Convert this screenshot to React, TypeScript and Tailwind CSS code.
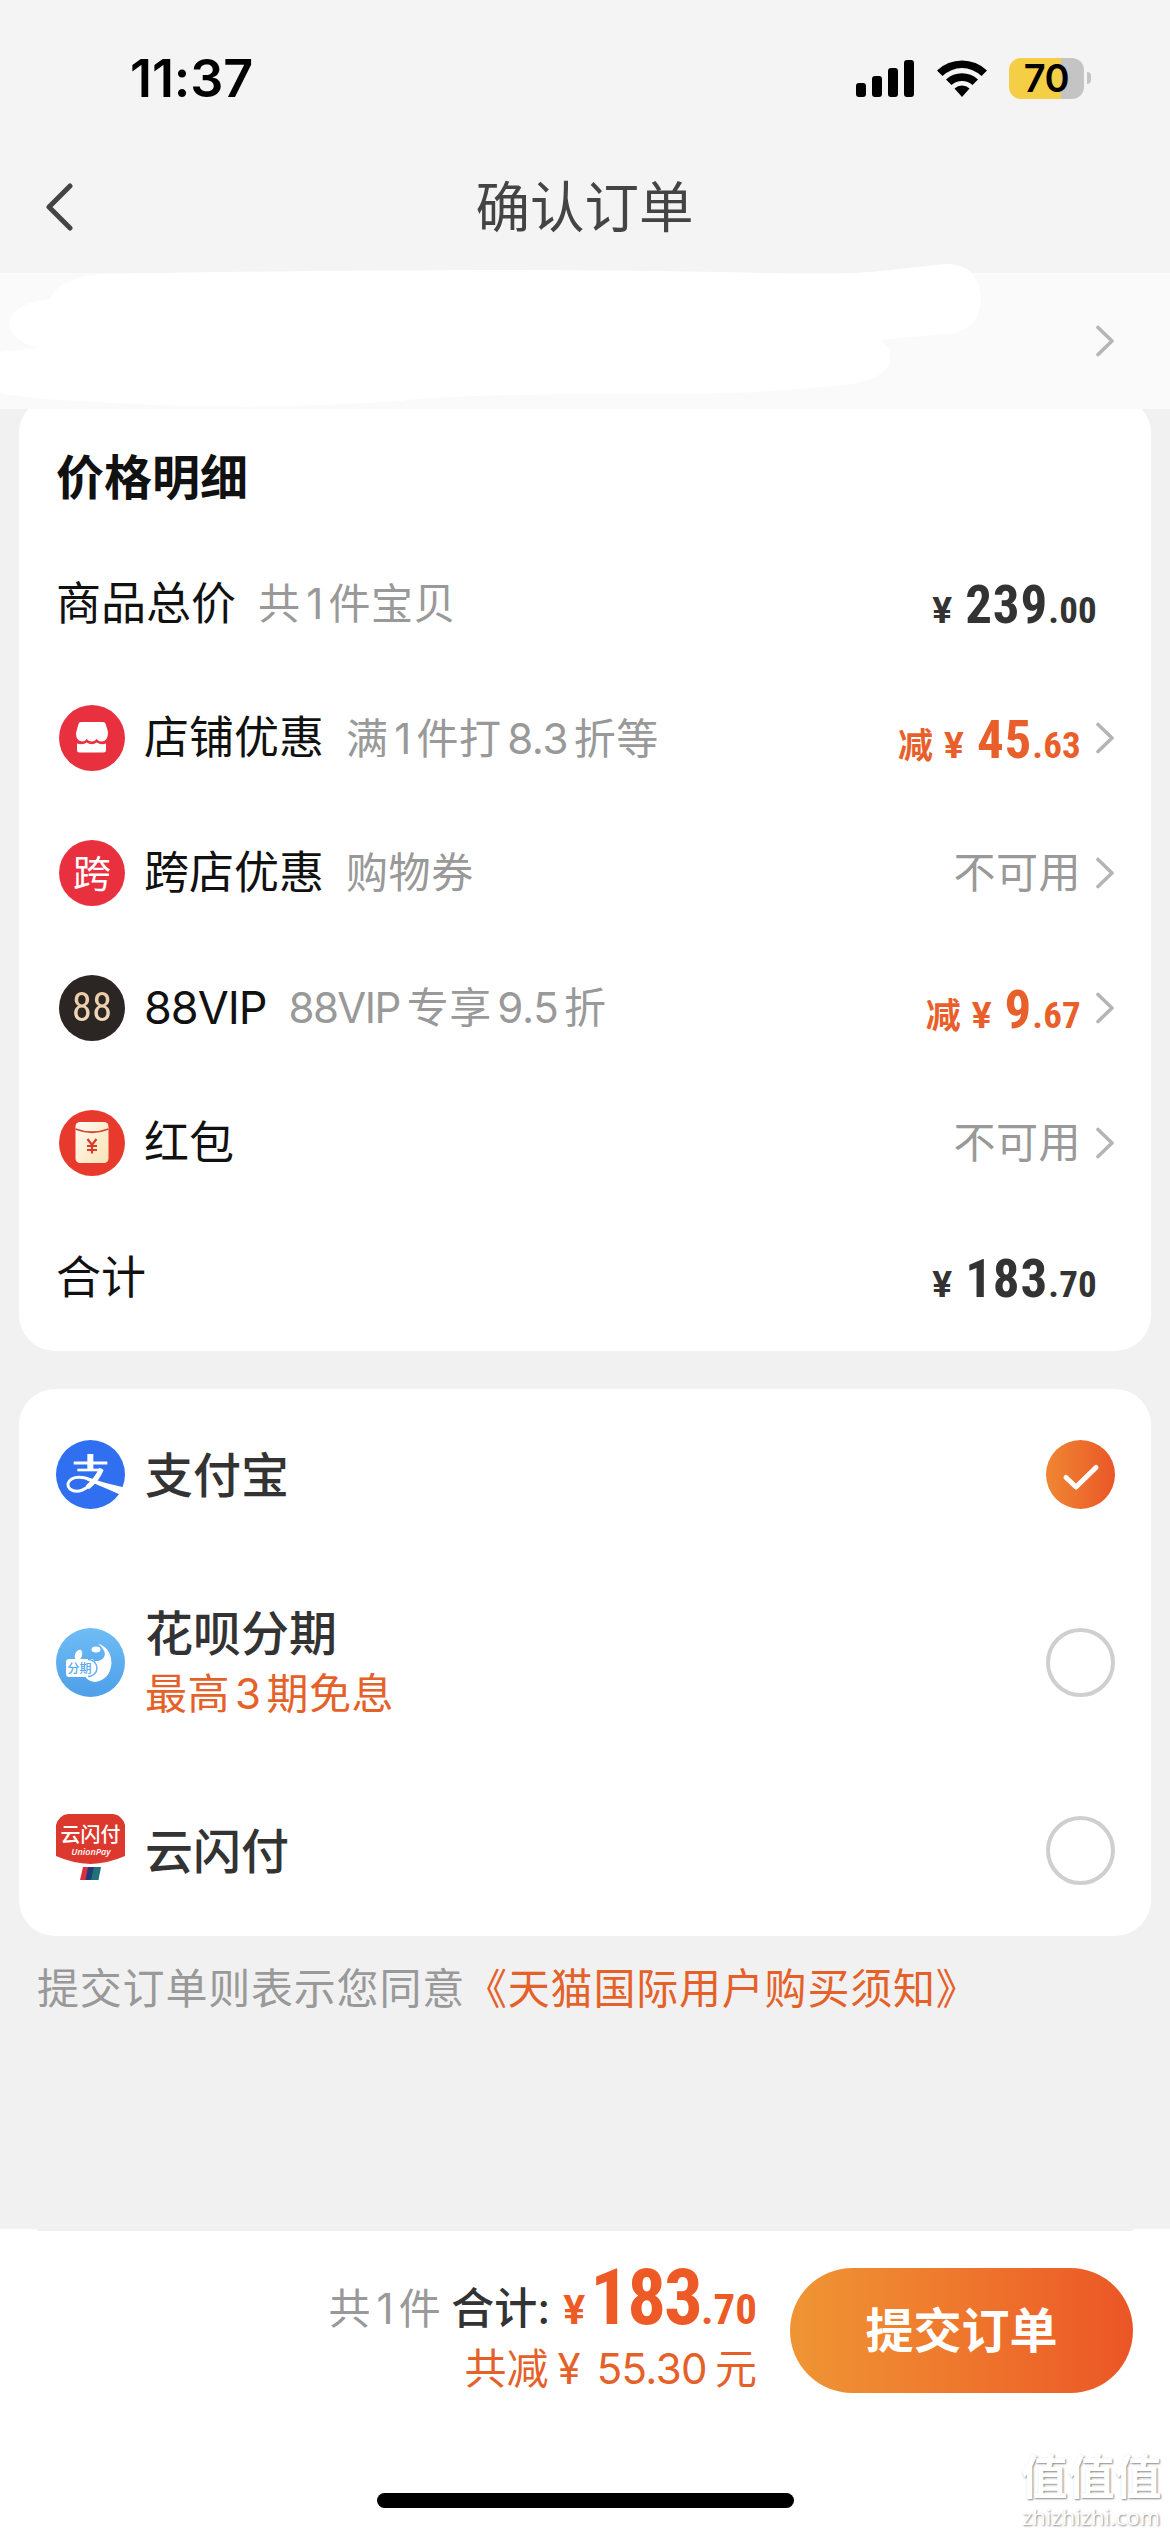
import type { ReactNode } from 'react'

const discounts = [
  { icon: <ShopIcon />, label: '店铺优惠', sub: <>满<Num>1</Num>件打<Num>8.3</Num>折等</>, cut: ['45', '.63'] },
  { icon: <CrossIcon />, label: '跨店优惠', sub: <>购物券</> },
  {
    icon: <VipIcon />,
    label: '88VIP',
    sub: <><span className="mr-[7px] tracking-[-1.6px]">88VIP</span>专享<Num>9.5</Num>折</>,
    cut: ['9', '.67'],
  },
  { icon: <RedPacketIcon />, label: '红包' },
]

const payments = [
  { icon: <AlipayIcon />, label: '支付宝', checked: true },
  { icon: <HuabeiIcon />, label: '花呗分期', note: <>最高<span className="mx-[5px]">3</span>期免息</> },
  { icon: <UnionPayIcon />, label: '云闪付' },
]

export default function App() {
  return (
    <div className="flex flex-col w-[1170px] h-[2532px] overflow-hidden bg-[#f1f1f1] text-[#111] font-['Inter','Noto_Sans_CJK_SC',sans-serif] whitespace-nowrap">
      <header className="h-[273px] shrink-0 bg-[#f4f4f4]">
        <StatusBar />
        <div className="flex items-center h-[118px] mt-[24px] pl-[45px] pr-[74px]">
          <svg width="28" height="48" viewBox="0 0 28 48" fill="none" stroke="#444" strokeWidth="5" strokeLinecap="round" strokeLinejoin="round">
            <path d="M25 3 L4 24 L25 45" />
          </svg>
          <h1 className="flex-1 text-center text-[54.5px] leading-[60px] text-[#444]">确认订单</h1>
        </div>
      </header>

      <AddressBar />

      {/* Price detail */}
      <section className="shrink-0 h-[954px] -mt-[12px] mx-[19px] px-[37px] pt-[37px] rounded-[36px] bg-white">
        <h2 className="h-[102px] text-[48px] leading-[88px] font-bold">价格明细</h2>
        <Row label="商品总价" sub={<>共<Num>1</Num>件宝贝</>}>
          <Price parts={['239', '.00']} />
        </Row>
        {discounts.map((item) => (
          <Row key={item.label} icon={item.icon} label={item.label} sub={item.sub}>
            {item.cut ? (
              <Price parts={item.cut} cut />
            ) : (
              <span className="text-[42px] tracking-[0.5px] text-[#999]">不可用</span>
            )}
            <Chevron />
          </Row>
        ))}
        <Row label="合计">
          <Price parts={['183', '.70']} />
        </Row>
      </section>

      {/* Payment methods */}
      <section className="flex flex-col shrink-0 h-[547px] mt-[38px] mx-[19px] pl-[37px] pr-[36px] rounded-[36px] bg-white">
        {payments.map((item) => (
          <div key={item.label} className={item.note ? 'flex items-center h-[206px]' : 'flex items-center h-[170px]'}>
            {item.icon}
            <div className="flex-1 ml-[20px] pt-[3px]">
              <p className="text-[48px] leading-[60px] font-medium text-[#333]">{item.label}</p>
              {item.note && <p className="text-[42px] leading-[60px] tracking-[0.5px] text-[#e5612a]">{item.note}</p>}
            </div>
            <Radio checked={item.checked} />
          </div>
        ))}
      </section>

      <p className="mt-[22px] pl-[37px] text-[42px] leading-[62px] tracking-[0.8px] text-[#999]">
        提交订单则表示您同意<span className="text-[#e5612a]">《天猫国际用户购买须知》</span>
      </p>

      <footer className="relative mt-auto h-[303px] shrink-0 bg-white">
        <div className="h-[2px] mx-[37px] bg-[#f0f0f0]" />
        <div className="flex justify-end items-start mt-[37px] pr-[37px]">
          <div className="flex flex-col items-end -mt-[5px] mr-[33px]">
            <div className="flex items-baseline leading-[70px]">
              <span className="text-[42px] tracking-[0.5px] text-[#999]">共<Num>1</Num>件</span>
              <span className="ml-[10px] mr-[13px] text-[43px] font-medium text-[#333]">合计:</span>
              <span className="flex items-baseline font-bold text-[#ee5a26] font-['Roboto',sans-serif] [font-stretch:75%]">
                <span className="text-[41px] [font-stretch:100%]">¥</span>
                <span className="ml-[5px] text-[77px] tracking-[-2px]">183</span>
                <span className="text-[43px]">.70</span>
              </span>
            </div>
            <p className="-mt-[6px] text-[42px] leading-[60px] text-[#e5612a]">
              共减<span className="ml-[9px] mr-[16px]">¥</span><span className="tracking-[-0.6px]">55.30</span><span className="ml-[8px]">元</span>
            </p>
          </div>
          <button className="w-[343px] h-[125px] rounded-full bg-linear-to-r from-[#ef9534] to-[#eb5526] text-white text-[48px] font-bold">
            提交订单
          </button>
        </div>
        <div className="absolute left-[377px] bottom-[24px] w-[417px] h-[15px] rounded-full bg-black" />
        <Watermark />
      </footer>
    </div>
  )
}

function StatusBar() {
  return (
    <div className="flex items-center h-[124px] pt-[32px] pl-[130px] pr-[79px]">
      <span className="flex-1 pt-[1px] text-[52px] leading-none font-semibold tracking-[-0.1px] text-black">11:37</span>
      <svg width="58" height="37" viewBox="0 0 58 37">
        <rect x="0" y="23" width="10" height="14" rx="3" />
        <rect x="16" y="16" width="10" height="21" rx="3" />
        <rect x="32" y="8" width="10" height="29" rx="3" />
        <rect x="48" y="0" width="10" height="37" rx="3" />
      </svg>
      <svg className="ml-[23px]" width="50" height="37" viewBox="0 0 50 37">
        <path d="M0 10.5 A36 36 0 0 1 50 10.5 L44.5 16 A28 28 0 0 0 5.5 16 Z" />
        <path d="M9 19.5 A23.500 23.500 0 0 1 41 19.500 L35.500 25 A15.500 15.500 0 0 0 14.500 25 Z" />
        <path d="M17.500 28.500 A11 11 0 0 1 32.500 28.500 L25 37 Z" />
      </svg>
      <div className="flex items-center justify-center w-[75px] h-[41px] ml-[22px] rounded-[12px] bg-[linear-gradient(90deg,#f4cf45_70%,#c4c4c4_70%)] text-black text-[38px] leading-none font-semibold tracking-[-0.5px]">
        70
      </div>
      <div className="w-[4px] h-[12px] ml-[3px] rounded-r-full bg-[#c4c4c4]" />
    </div>
  )
}

function AddressBar() {
  return (
    <div className="relative z-10 flex items-center justify-end shrink-0 h-[136px] pr-[55px] bg-[#fafafa]">
      {/* Hand-painted mask over the address */}
      <svg className="absolute left-0 -top-[10px]" width="1000" height="146" viewBox="0 0 1000 146" fill="#fff">
        <path d="M110 11 Q520 3 800 11 Q850 12 890 7 L945 1 Q980 0 981 38 Q978 70 945 71 L880 77 Q892 84 890 100 Q880 122 820 124 Q740 133 580 131 Q440 132 400 138 Q240 149 80 138 Q30 136 0 130 V89 L38 85 Q8 76 9 58 Q15 40 50 36 Q60 12 110 11 Z" />
      </svg>
      <Chevron />
    </div>
  )
}

interface RowProps {
  icon?: ReactNode
  label: string
  sub?: ReactNode
  children: ReactNode
}

function Row({ icon, label, sub, children }: RowProps) {
  return (
    <div className={icon ? 'flex items-center h-[134.8px] pl-[3px] -mr-[1px]' : 'flex items-center h-[134.8px] pr-[17px]'}>
      {icon}
      <span className={label === '88VIP' ? 'ml-[19px] text-[45px] tracking-[-1px]' : icon ? 'ml-[19px] text-[45px]' : 'text-[45px]'}>
        {label}
      </span>
      <span className="flex-1 ml-[22px] text-[42px] tracking-[0.6px] text-[#999]">{sub}</span>
      {children}
    </div>
  )
}

function Price({ parts, cut }: { parts: string[]; cut?: boolean }) {
  return (
    <span
      className={`flex items-baseline pt-[5px] font-bold font-['Roboto','Noto_Sans_CJK_SC',sans-serif] [font-stretch:75%] ${
        cut ? 'text-[#e95f2b]' : 'text-[#333]'
      }`}
    >
      {cut && <span className="mr-[11px] text-[35px]">减</span>}
      <span className="text-[37px] [font-stretch:100%]">¥</span>
      <span className="ml-[13px] text-[53px] tracking-[0.9px]">{parts[0]}</span>
      <span className="text-[37px] tracking-[0.2px]">{parts[1]}</span>
    </span>
  )
}

function Num({ children }: { children: ReactNode }) {
  return <span className="mx-[5.5px] tracking-[-0.3px]">{children}</span>
}

function Chevron() {
  return (
    <svg className="ml-[14px] shrink-0" width="20" height="32" viewBox="0 0 20 32" fill="none" stroke="#b5b5b5" strokeWidth="3.6" strokeLinecap="round" strokeLinejoin="round">
      <path d="M3 2.500 L17 16 L3 29.500" />
    </svg>
  )
}

function Radio({ checked }: { checked?: boolean }) {
  if (!checked) return <div className="w-[69px] h-[69px] rounded-full border-4 border-[#cfcfcf]" />
  return (
    <div className="w-[69px] h-[69px] rounded-full bg-linear-to-r from-[#ef8632] to-[#ea5628]">
      <svg width="69" height="69" viewBox="0 0 69 69" fill="none" stroke="#fff" strokeWidth="5" strokeLinecap="round" strokeLinejoin="round">
        <path d="M20 37.500 L30 47 L50 27.500" />
      </svg>
    </div>
  )
}

function ShopIcon() {
  return (
    <svg width="66" height="66" viewBox="0 0 66 66">
      <circle cx="33" cy="33" r="33" fill="#e8303f" />
      <path d="M22 17 H44 Q46 17 46.700 19 L49 27 Q49 36.500 42.500 36.500 Q39.500 36.500 37.700 34 Q35.500 36.500 32.700 36.500 Q30 36.500 27.700 34 Q26 36.500 23 36.500 Q17 36 17 28 L19.500 19 Q20 17 22 17 Z" fill="#fff" />
      <path d="M18 38.500 Q24 40.500 27.700 37.500 Q32.700 41 37.700 37.500 Q42 40.500 47 38.500 V45 Q47 47.500 44.500 47.500 H20.500 Q18 47.500 18 45 Z" fill="#fff" />
    </svg>
  )
}

function CrossIcon() {
  return (
    <div className="flex items-center justify-center w-[66px] h-[66px] rounded-full bg-[#e8303f] text-white text-[38px] leading-none">
      跨
    </div>
  )
}

function VipIcon() {
  return (
    <div className="flex items-center justify-center w-[66px] h-[66px] rounded-full bg-[#2b2523]">
      <span className="bg-linear-to-b from-[#e8c9a0] to-[#f3dcc0] bg-clip-text text-transparent text-[41px] leading-none font-['Roboto',sans-serif] [font-stretch:75%]">
        88
      </span>
    </div>
  )
}

function RedPacketIcon() {
  return (
    <svg width="66" height="66" viewBox="0 0 66 66">
      <defs>
        <linearGradient id="packet" x1="0" y1="0" x2="1" y2="1">
          <stop offset="0" stopColor="#fffaf2" />
          <stop offset="1" stopColor="#fae3b4" />
        </linearGradient>
      </defs>
      <circle cx="33" cy="33" r="33" fill="#e83a2c" />
      <rect x="16.500" y="12" width="33" height="41" rx="4.500" fill="url(#packet)" />
      <path d="M16.500 19 Q33 25.500 49.500 19" fill="none" stroke="#d8402e" strokeWidth="1.800" />
      <path d="M28.500 29 L33 35 L37.500 29 M33 35 V43.500 M28 36 H38 M28 40 H38" fill="none" stroke="#d83a2c" strokeWidth="2.200" />
    </svg>
  )
}

function AlipayIcon() {
  return (
    <svg width="69" height="69" viewBox="48 60 207 207">
      <circle cx="151.500" cy="163.500" r="103.500" fill="#2f6ff0" />
      <g fill="none" stroke="#fff">
        <path d="M151 102 V148" strokeWidth="18" />
        <path d="M101 129 H202" strokeWidth="9" />
        <path d="M112 150 H186" strokeWidth="8" />
        <path d="M184 147 Q172 178 142 202 Q112 223 90 207 Q75 190 95 177 Q118 165 158 182" strokeWidth="9" />
        <path d="M184 147 Q172 178 142 202" strokeWidth="15" />
      </g>
      <path d="M140 172 Q195 190 250 202 L238 223 Q195 204 140 181 Z" fill="#fff" />
    </svg>
  )
}

function HuabeiIcon() {
  return (
    <svg width="69" height="69" viewBox="0 0 69 69">
      <defs>
        <linearGradient id="huabei" x1="0" y1="0" x2="0" y2="1">
          <stop offset="0" stopColor="#6fbdf6" />
          <stop offset="1" stopColor="#4d9fe8" />
        </linearGradient>
      </defs>
      <circle cx="34.500" cy="34.500" r="34.500" fill="url(#huabei)" />
      <path d="M42 15.500 Q55 20 55.500 35 Q54 52 39 54 Q31 53 29 48 L28 31 Q38 35 45 32 Q54 26 42 15.500 Z" fill="#fff" />
      <ellipse cx="40" cy="21.500" rx="4.500" ry="3" fill="#fff" />
      <ellipse cx="22.500" cy="27" rx="3.500" ry="5.500" transform="rotate(20 22.500 27)" fill="#fff" />
      <rect x="10" y="31" width="28" height="18" rx="3" fill="#fff" />
      <path d="M32 31.500 A9 8.500 0 0 1 32 48.500" fill="none" stroke="#62b0f0" strokeWidth="1.500" />
      <text x="11.500" y="44.500" fontSize="12" fontWeight="500" fill="#58a8ee">分期</text>
    </svg>
  )
}

function UnionPayIcon() {
  return (
    <svg className="-mt-[3px]" width="69" height="69" viewBox="0 0 69 69">
      <path d="M12 0 H57 Q66 1 69 11 V42 Q52 49.500 34.500 50 Q17 49.500 0 42 V11 Q3 1 12 0 Z" fill="#dc382d" />
      <text x="34.500" y="28" textAnchor="middle" fontSize="20" fontWeight="500" fill="#fff">云闪付</text>
      <text x="35" y="41" textAnchor="middle" fontSize="9" fontStyle="italic" fontWeight="600" fill="#fff" className="font-['Open_Sans',sans-serif]">UnionPay</text>
      <path d="M27 53 H34 L31 66 H24 Z" fill="#d9303c" />
      <path d="M32 53 H39 L36 66 H29.500 Z" fill="#1f3c78" />
      <path d="M38 53 H45 L42.500 66 H35 Z" fill="#1f7378" />
    </svg>
  )
}

function Watermark() {
  return (
    <div className="absolute right-[8px] bottom-[1px] w-[142px] flex flex-col items-center text-white [text-shadow:1px_1px_2px_#888]">
      <span className="text-[47px] leading-[48px] font-bold">值值值</span>
      <span className="text-[22px] leading-[30px] font-medium font-['Open_Sans',sans-serif]">zhizhizhi.com</span>
    </div>
  )
}
